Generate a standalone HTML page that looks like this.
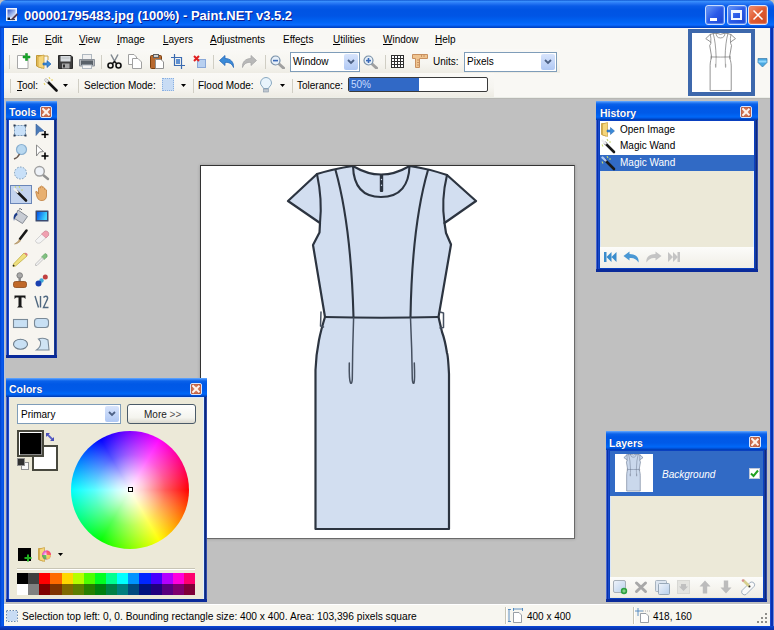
<!DOCTYPE html>
<html><head><meta charset="utf-8">
<style>
*{margin:0;padding:0;box-sizing:border-box}
html,body{width:774px;height:630px;overflow:hidden;background:#c0c0c0}
body{position:relative;font-family:"Liberation Sans",sans-serif;font-size:11px;color:#000}
.a{position:absolute}
.t{position:absolute;white-space:nowrap;line-height:1}
/* main frame */
#title{left:0;top:0;width:774px;height:28px;border-radius:6px 6px 0 0;
 background:linear-gradient(#0040c0 0px,#3d95ff 1px,#2a7af5 3px,#0a5ce8 6px,#0054e3 10px,#0055e5 16px,#0064f4 22px,#0a6aff 25px,#0050d8 26.5px,#003cc0 28px)}
#lb{left:0;top:28px;width:4px;height:602px;background:linear-gradient(90deg,#0040c8,#0a5cf0 50%,#0050e0)}
#rb{left:770px;top:28px;width:4px;height:602px;background:linear-gradient(90deg,#1848d0 0 1px,#0a30b0 1px 3px,#6a88e0 3px)}
#bb{left:0;top:626px;width:774px;height:4px;background:linear-gradient(#0a48d8,#0838b8 50%,#0830a8)}
#top{left:4px;top:28px;width:766px;height:70px;background:#f9f8f4}
#status{left:4px;top:604px;width:766px;height:22px;background:#f7f6f0;border-top:1px solid #fff}
.win{position:absolute;background:#0a3fd0;border:1px solid #0838b0}
.wt{position:absolute;left:0;top:0;right:0;height:19px;
 background:linear-gradient(#6fb0ff 0px,#3f8cf8 1px,#0a62ea 3px,#0058e6 6px,#005ae8 12px,#0068f8 16px,#0050d8 17.5px,#003aa8 19px)}
.wtt{position:absolute;left:3px;top:4px;color:#fff;font-weight:bold;font-size:10.5px;line-height:1;text-shadow:0 0 1px #0a2a8a}
.close{position:absolute;width:12px;height:12px;border:1px solid #d8e6ff;border-radius:2px;background:radial-gradient(circle at 50% 50%,#e8a080,#c86848 60%,#a84830)}
.close:before,.close:after{content:"";position:absolute;left:4.3px;top:0px;width:1.5px;height:10px;background:#fff4ee;transform:rotate(45deg)}
.close:after{transform:rotate(-45deg)}
.content{position:absolute;background:#ece9d8}
.sep{position:absolute;width:1px;background:#c5c2b2;border-right:1px solid #fff}
</style></head><body>
<div id="title" class="a"></div>
<div id="lb" class="a"></div>
<div id="rb" class="a"></div>
<div id="bb" class="a"></div>
<div class="a" style="left:4px;top:98px;width:1px;height:506px;background:#b8c4dc"></div>
<div id="top" class="a"></div>
<div class="a" style="left:4px;top:97px;width:766px;height:1px;background:#eceee8"></div>
<div class="a" style="left:4px;top:98px;width:766px;height:1px;background:#b8b8b4"></div>
<div id="status" class="a"></div>
<div class="a" style="left:4px;top:49px;width:556px;height:24px;background:linear-gradient(#faf9f6,#f6f5f0 60%,#eeece4)"></div>
<div class="a" style="left:4px;top:73px;width:490px;height:24px;background:linear-gradient(#faf9f6,#f6f5f0 60%,#eeece4)"></div>

<!-- title bar content -->
<svg class="a" style="left:6px;top:8px" width="12" height="14" viewBox="0 0 12 14">
 <defs><linearGradient id="ic1" x1="0" y1="0" x2="1" y2="1"><stop offset="0" stop-color="#3050c0"/><stop offset="0.6" stop-color="#a8c0f0"/><stop offset="1" stop-color="#f4f6ff"/></linearGradient></defs>
 <rect x="0" y="0" width="11" height="13" fill="#f0f4ff"/>
 <rect x="1.5" y="1.5" width="8" height="8" fill="url(#ic1)"/>
 <path d="M6 11.5 L11.5 6" stroke="#503850" stroke-width="1.8"/>
 <rect x="1.5" y="9.5" width="2.5" height="2.5" fill="#101018"/>
 <path d="M4 11.5 H9" stroke="#404050" stroke-width="1.2"/>
</svg>
<div class="t" style="left:24px;top:9px;font-size:13px;font-weight:bold;color:#fff;text-shadow:1px 1px 0 #0a1a90">000001795483.jpg (100%) - Paint.NET v3.5.2</div>
<div class="a" style="left:705px;top:5px;width:20px;height:20px;border:1px solid #c8dcff;border-radius:3px;background:linear-gradient(135deg,#6a9cf8,#2a5ae8 50%,#1a44d0);box-shadow:inset 0 0 1px 1px #5a88f0"></div>
<div class="a" style="left:710px;top:18px;width:7px;height:3px;background:#fff"></div>
<div class="a" style="left:727px;top:5px;width:20px;height:20px;border:1px solid #c8dcff;border-radius:3px;background:linear-gradient(135deg,#6a9cf8,#2a5ae8 50%,#1a44d0);box-shadow:inset 0 0 1px 1px #5a88f0"></div>
<div class="a" style="left:731px;top:10px;width:11px;height:10px;border:2px solid #f0f6ff;border-top-width:3px"></div>
<div class="a" style="left:748px;top:5px;width:20px;height:20px;border:1px solid #e0e8ff;border-radius:3px;background:linear-gradient(135deg,#f09070,#e05a30 50%,#c84824);box-shadow:inset 0 0 1px 1px #e88060"></div>
<svg class="a" style="left:752px;top:9px" width="12" height="12"><path d="M1.5 1.5 L10.5 10.5 M10.5 1.5 L1.5 10.5" stroke="#fff" stroke-width="1.5"/></svg>

<!-- menu -->
<div class="t" style="left:12px;top:35px;font-size:10px"><u>F</u>ile</div>
<div class="t" style="left:45px;top:35px;font-size:10px"><u>E</u>dit</div>
<div class="t" style="left:79px;top:35px;font-size:10px"><u>V</u>iew</div>
<div class="t" style="left:117px;top:35px;font-size:10px"><u>I</u>mage</div>
<div class="t" style="left:163px;top:35px;font-size:10px"><u>L</u>ayers</div>
<div class="t" style="left:210px;top:35px;font-size:10px"><u>A</u>djustments</div>
<div class="t" style="left:283px;top:35px;font-size:10px">Effe<u>c</u>ts</div>
<div class="t" style="left:333px;top:35px;font-size:10px"><u>U</u>tilities</div>
<div class="t" style="left:383px;top:35px;font-size:10px"><u>W</u>indow</div>
<div class="t" style="left:435px;top:35px;font-size:10px"><u>H</u>elp</div>

<!-- toolbar 1 -->
<div class="a" style="left:9px;top:55px;width:1px;height:14px;background:#d0cec4"></div>
<svg class="a" style="left:16px;top:53px" width="15" height="17" viewBox="0 0 15 17">
 <path d="M1.5 2.5 H9 L12 5.5 V15.5 H1.5Z" fill="#fff" stroke="#a8a8a8"/>
 <path d="M9.5 0.5 h2 v2.5 h2.5 v2 h-2.5 v2.5 h-2 v-2.5 h-2.5 v-2 h2.5z" fill="#1aa82a" stroke="#0a8a1a" stroke-width="0.5"/>
</svg>
<svg class="a" style="left:36px;top:54px" width="16" height="15" viewBox="0 0 16 15">
 <path d="M0.5 1.5 H6 V14 L0.5 12Z" fill="#f0c860" stroke="#c09838"/>
 <path d="M2 2.5 L8 1 V14.5 L2 13Z" fill="#f6d67a" stroke="#c8a040" stroke-width="0.8"/>
 <path d="M8 2 H12 V6" fill="none" stroke="#c8a040"/>
 <path d="M7 9 H11 V6.5 L15 10 L11 13.5 V11 H7Z" fill="#3a8ad8" stroke="#1a5aa8" stroke-width="0.6"/>
</svg>
<svg class="a" style="left:58px;top:55px" width="15" height="14" viewBox="0 0 15 14">
 <path d="M0.5 0.5 H13 L14.5 2 V13.5 H0.5Z" fill="#3e3e3e" stroke="#2a2a2a"/>
 <rect x="2.5" y="1" width="10" height="5.5" fill="#d8dce0"/>
 <path d="M3.5 3 H11.5" stroke="#b0b4b8" stroke-width="0.8"/>
 <rect x="4" y="8.5" width="7.5" height="5" fill="#a8a8a8"/>
 <rect x="5" y="9.5" width="2" height="3" fill="#303030"/>
</svg>
<svg class="a" style="left:79px;top:54px" width="16" height="15" viewBox="0 0 16 15">
 <rect x="3.5" y="0.5" width="9" height="5" fill="#f0f0f0" stroke="#b0b8c0"/>
 <path d="M0.5 5.5 H15.5 V12 H0.5Z" fill="#b8bcc0" stroke="#8a9098"/>
 <rect x="2" y="6.5" width="12" height="4.5" fill="#586068"/>
 <rect x="3.5" y="11" width="9" height="3.5" fill="#f4f4f4" stroke="#b0b8c0"/>
</svg>
<div class="a" style="left:101px;top:55px;width:1px;height:14px;background:#d0cec4"></div>
<svg class="a" style="left:107px;top:54px" width="15" height="15" viewBox="0 0 15 15">
 <path d="M4 0.5 L8.5 9 M11 0.5 L6.5 9" stroke="#808890" stroke-width="1.5"/>
 <circle cx="3.5" cy="11.5" r="2.5" fill="none" stroke="#101010" stroke-width="1.6"/>
 <circle cx="11.5" cy="11.5" r="2.5" fill="none" stroke="#101010" stroke-width="1.6"/>
 <path d="M5 10 L7.5 7.5 L10 10" stroke="#101010" stroke-width="1.4" fill="none"/>
</svg>
<svg class="a" style="left:128px;top:54px" width="14" height="15" viewBox="0 0 14 15">
 <path d="M0.5 0.5 H6 L8.5 3 V10.5 H0.5Z" fill="#fff" stroke="#a0a0a0"/>
 <path d="M4.5 4.5 H10 L13.5 8 V14.5 H4.5Z" fill="#fff" stroke="#a0a0a0"/>
</svg>
<svg class="a" style="left:150px;top:54px" width="14" height="15" viewBox="0 0 14 15">
 <rect x="0.5" y="1.5" width="11" height="13" rx="1" fill="#b86a30" stroke="#7a4010"/>
 <rect x="3.5" y="0.5" width="5" height="3" fill="#d0d0d0" stroke="#606060"/>
 <path d="M5.5 5.5 H11 L13.5 8 V14.5 H5.5Z" fill="#fff" stroke="#909090"/>
</svg>
<svg class="a" style="left:171px;top:54px" width="14" height="15" viewBox="0 0 14 15">
 <path d="M3.5 0 V11.5 H14 M0 3.5 H10.5 V15" fill="none" stroke="#3a6ab0" stroke-width="1.2"/>
 <rect x="5" y="5" width="4" height="5" fill="#6090d0"/>
</svg>
<svg class="a" style="left:193px;top:55px" width="13" height="13" viewBox="0 0 13 13">
 <rect x="4.5" y="4.5" width="8" height="8" fill="#b8d0f0" stroke="#8aa8d8"/>
 <path d="M1 1 L6 6 M6 1 L1 6" stroke="#e02020" stroke-width="2"/>
</svg>
<div class="a" style="left:213px;top:55px;width:1px;height:14px;background:#d0cec4"></div>
<svg class="a" style="left:219px;top:55px" width="16" height="13" viewBox="0 0 16 13">
 <path d="M6 0.5 L0.5 5.5 L6 10.5 V7.5 C10 7 13 8.5 14.5 12.5 C15 7 11.5 3.5 6 3.5Z" fill="#3a8ad8" stroke="#2a6ab8" stroke-width="0.8"/>
</svg>
<svg class="a" style="left:241px;top:55px" width="16" height="13" viewBox="0 0 16 13">
 <path d="M10 0.5 L15.5 5.5 L10 10.5 V7.5 C6 7 3 8.5 1.5 12.5 C1 7 4.5 3.5 10 3.5Z" fill="#b8b8b8" stroke="#a8a8a8" stroke-width="0.8"/>
</svg>
<div class="a" style="left:265px;top:55px;width:1px;height:14px;background:#d0cec4"></div>
<svg class="a" style="left:270px;top:55px" width="15" height="14" viewBox="0 0 15 14">
 <path d="M8 8 L13.5 13" stroke="#a0a0a0" stroke-width="3" stroke-linecap="round"/>
 <circle cx="5.5" cy="5.5" r="4.5" fill="#e8f0f8" stroke="#7890a8" stroke-width="1.2"/>
 <rect x="3" y="4.8" width="5" height="1.6" fill="#3a6ab8"/>
</svg>
<div class="a" style="left:290px;top:52px;width:70px;height:20px;background:#fff;border:1px solid #7f9db9"></div>
<div class="t" style="left:293px;top:57px;font-size:10px">Window</div>
<div class="a" style="left:344px;top:54px;width:14px;height:16px;border-radius:2px;background:linear-gradient(#d8e4fc,#b0c8f4)"></div>
<svg class="a" style="left:347px;top:59px" width="8" height="6"><path d="M1 1 L4 4 L7 1" fill="none" stroke="#4d6185" stroke-width="1.8"/></svg>
<svg class="a" style="left:363px;top:55px" width="15" height="14" viewBox="0 0 15 14">
 <path d="M8 8 L13.5 13" stroke="#a0a0a0" stroke-width="3" stroke-linecap="round"/>
 <circle cx="5.5" cy="5.5" r="4.5" fill="#e8f0f8" stroke="#7890a8" stroke-width="1.2"/>
 <rect x="3" y="4.8" width="5" height="1.6" fill="#3a6ab8"/><rect x="4.7" y="3" width="1.6" height="5" fill="#3a6ab8"/>
</svg>
<div class="a" style="left:385px;top:55px;width:1px;height:14px;background:#d0cec4"></div>
<svg class="a" style="left:391px;top:55px" width="13" height="13" viewBox="0 0 13 13">
 <rect x="0.5" y="0.5" width="12" height="12" fill="#fff" stroke="#303030"/>
 <path d="M3.5 0 V13 M6.5 0 V13 M9.5 0 V13 M0 3.5 H13 M0 6.5 H13 M0 9.5 H13" stroke="#303030"/>
</svg>
<svg class="a" style="left:412px;top:54px" width="16" height="14" viewBox="0 0 16 14">
 <path d="M0.5 0.5 H15.5 V4.5 H7.5 V13.5 H3.5 V4.5 H0.5Z" fill="#f0c490" stroke="#c89060"/>
 <path d="M5 6 H7 M5 8.5 H7 M5 11 H7 M9.5 1 V3 M12 1 V3" stroke="#b88050" stroke-width="0.7"/>
</svg>
<div class="t" style="left:433px;top:57px;font-size:10px">Units:</div>
<div class="a" style="left:464px;top:52px;width:93px;height:20px;background:#fff;border:1px solid #7f9db9"></div>
<div class="t" style="left:467px;top:57px;font-size:10px">Pixels</div>
<div class="a" style="left:541px;top:54px;width:14px;height:16px;border-radius:2px;background:linear-gradient(#d8e4fc,#b0c8f4)"></div>
<svg class="a" style="left:544px;top:59px" width="8" height="6"><path d="M1 1 L4 4 L7 1" fill="none" stroke="#4d6185" stroke-width="1.8"/></svg>

<!-- toolbar 2 -->
<div class="a" style="left:10px;top:79px;width:1px;height:14px;background:#d0cec4"></div>
<div class="t" style="left:17px;top:81px;font-size:10px"><u>T</u>ool:</div>
<svg class="a" style="left:43px;top:77px" width="15" height="15" viewBox="0 0 15 15">
 <path d="M3 3 L13.5 13.5" stroke="#101010" stroke-width="2.6" stroke-linecap="round"/>
 <path d="M2 2 L5 5" stroke="#e0e0e0" stroke-width="2.6"/>
 <path d="M6 0 L7 2 M8 3 L10 3 M1 6 L2 8" stroke="#e8d050" stroke-width="1"/>
</svg>
<svg class="a" style="left:63px;top:84px" width="6" height="4"><path d="M0 0 H5 L2.5 3Z" fill="#000"/></svg>
<div class="a" style="left:78px;top:79px;width:1px;height:14px;background:#d0cec4"></div>
<div class="t" style="left:84px;top:81px;font-size:10px">Selection Mode:</div>
<div class="a" style="left:162px;top:78px;width:12px;height:13px;background:#c8dcf4;border:1px dotted #8ab0e0"></div>
<svg class="a" style="left:181px;top:84px" width="6" height="4"><path d="M0 0 H5 L2.5 3Z" fill="#000"/></svg>
<div class="a" style="left:193px;top:79px;width:1px;height:14px;background:#d0cec4"></div>
<div class="t" style="left:198px;top:81px;font-size:10px">Flood Mode:</div>
<svg class="a" style="left:260px;top:77px" width="12" height="16" viewBox="0 0 12 16">
 <path d="M6 0.5 C9 0.5 11.5 3 11.5 6 C11.5 8.5 9 9.5 8.5 11.5 H3.5 C3 9.5 0.5 8.5 0.5 6 C0.5 3 3 0.5 6 0.5Z" fill="#e8f4fc" stroke="#88a8c0"/>
 <rect x="3.5" y="12" width="5" height="3" fill="#c0c8d0" stroke="#8898a8" stroke-width="0.6"/>
</svg>
<svg class="a" style="left:280px;top:84px" width="6" height="4"><path d="M0 0 H5 L2.5 3Z" fill="#000"/></svg>
<div class="a" style="left:292px;top:79px;width:1px;height:14px;background:#d0cec4"></div>
<div class="t" style="left:297px;top:81px;font-size:10px">Tolerance:</div>
<div class="a" style="left:348px;top:77px;width:140px;height:15px;background:#fff;border:1px solid #3a3a3a;border-radius:2px;overflow:hidden">
 <div class="a" style="left:0;top:0;width:70px;height:13px;background:#3169c6"></div>
 <div class="t" style="left:2px;top:2px;font-size:10px;color:#c8dcff">50%</div>
</div>

<!-- navigator -->
<div class="a" style="left:688px;top:29px;width:67px;height:67px;border:4px solid #3d68ac;background:#fff"></div>
<svg class="a" style="left:692px;top:33px" width="59" height="59" viewBox="201 166 373 372"><g stroke-linejoin="round" stroke-linecap="round">
  <path style="fill:#fff;stroke:#777;stroke-width:5" d="M353 166 Q333 169 317 174 L288 201 L320 223 L319.5 232.5 L313 245 L325 317 Q321 330 319 340 Q316 355 315.5 370 L315.5 529 L449 529 L449 374 Q448 355 447 353 Q445 340 442 332 L438.5 317 L451 244.5 L446 233 L444.5 223 L476 201 L447 175 Q430 169 409.5 166 Q381 183 353 166Z"/>
  <path style="fill:none;stroke:#777;stroke-width:4.5" d="M353 166 C353.5 184 361 197 381 197 C401 197 409 184 409.5 166"/>
  <path style="fill:none;stroke:#777;stroke-width:4.5" d="M317 174 Q322.5 200 320 223"/>
  <path style="fill:none;stroke:#777;stroke-width:4.5" d="M447 175 Q441 200 444.5 223"/>
  <path style="fill:none;stroke:#777;stroke-width:4.5" d="M335.5 170 Q351 225 353.5 317"/>
  <path style="fill:none;stroke:#777;stroke-width:4.5" d="M428 170 Q412 225 410.5 317"/>
  <path style="fill:none;stroke:#777;stroke-width:4.5" d="M325 317 Q381 318.5 438.5 317"/>
  <path style="fill:none;stroke:#888;stroke-width:4" d="M353.6 318 Q352.5 350 352.3 379 Q352 384.5 350.5 383 Q349 380 349.3 363"/>
  <path style="fill:none;stroke:#888;stroke-width:4" d="M410.5 318 Q412 350 412.3 379 Q412.6 384.5 414 383 Q415 380 414.3 363"/>
  <path style="fill:none;stroke:#888;stroke-width:4" d="M321 312 L320.5 326 L323.5 327"/>
  <path style="fill:none;stroke:#888;stroke-width:4" d="M440 312 L443.5 313 L443.5 327.5 L440 328"/>
  <g style="fill:none"><rect x="379.8" y="174" width="3.4" height="18" rx="1"/></g><g style="fill:#fff"><circle cx="381.5" cy="179.5" r="0.7"/><circle cx="381.5" cy="185.3" r="0.7"/></g>
 </g>
 </svg>
<svg class="a" style="left:757px;top:58px" width="11" height="10" viewBox="0 0 11 10">
 <path d="M1 0.5 H10 V4.5 L5.5 9 L1 4.5Z" fill="#4aa8e0" stroke="#3a78a8" stroke-width="0.7"/>
 <rect x="1.5" y="2.5" width="8" height="2" fill="#90d8ff"/>
</svg>

<!-- canvas -->
<div class="a" style="left:200px;top:165px;width:375px;height:374px;background:#fff;border:1px solid #333;border-right-color:#6a6a6a;border-bottom-color:#6a6a6a;box-shadow:0 0 3px rgba(0,0,0,0.22)"></div>

<svg class="a" style="left:201px;top:166px" width="373" height="372" viewBox="201 166 373 372"><g stroke-linejoin="round" stroke-linecap="round">
  <path style="fill:#d2def0;stroke:#2c3440;stroke-width:2.2" d="M353 166 Q333 169 317 174 L288 201 L320 223 L319.5 232.5 L313 245 L325 317 Q321 330 319 340 Q316 355 315.5 370 L315.5 529 L449 529 L449 374 Q448 355 447 353 Q445 340 442 332 L438.5 317 L451 244.5 L446 233 L444.5 223 L476 201 L447 175 Q430 169 409.5 166 Q381 183 353 166Z"/>
  <path style="fill:none;stroke:#2c3440;stroke-width:2.1" d="M353 166 C353.5 184 361 197 381 197 C401 197 409 184 409.5 166"/>
  <path style="fill:none;stroke:#2c3440;stroke-width:2.1" d="M317 174 Q322.5 200 320 223"/>
  <path style="fill:none;stroke:#2c3440;stroke-width:2.1" d="M447 175 Q441 200 444.5 223"/>
  <path style="fill:none;stroke:#2c3440;stroke-width:2.1" d="M335.5 170 Q351 225 353.5 317"/>
  <path style="fill:none;stroke:#2c3440;stroke-width:2.1" d="M428 170 Q412 225 410.5 317"/>
  <path style="fill:none;stroke:#2c3440;stroke-width:2.1" d="M325 317 Q381 318.5 438.5 317"/>
  <path style="fill:none;stroke:#465060;stroke-width:1.5" d="M353.6 318 Q352.5 350 352.3 379 Q352 384.5 350.5 383 Q349 380 349.3 363"/>
  <path style="fill:none;stroke:#465060;stroke-width:1.5" d="M410.5 318 Q412 350 412.3 379 Q412.6 384.5 414 383 Q415 380 414.3 363"/>
  <path style="fill:none;stroke:#465060;stroke-width:1.5" d="M321 312 L320.5 326 L323.5 327"/>
  <path style="fill:none;stroke:#465060;stroke-width:1.5" d="M440 312 L443.5 313 L443.5 327.5 L440 328"/>
  <g style="fill:#2c3440"><rect x="379.8" y="174" width="3.4" height="18" rx="1"/></g><g style="fill:#d2def0"><circle cx="381.5" cy="179.5" r="0.7"/><circle cx="381.5" cy="185.3" r="0.7"/></g>
 </g>
 </svg>

<!-- windows -->
<div class="a" style="left:6px;top:101px;width:51px;height:257px;background:linear-gradient(90deg,#4a68d0 0 1px,#0830a8 1px 2px,#1a48c8 2px 3px,#0a40c0 3px calc(100% - 3px),#1a3a98 calc(100% - 3px) calc(100% - 2px),#0a2a80 calc(100% - 2px) calc(100% - 1px),#3048a8 calc(100% - 1px));border-radius:3px 3px 0 0"></div>
<div class="a" style="left:6px;top:355px;width:51px;height:3px;background:#0a2a9a"></div>
<div class="a wt" style="left:6px;top:101px;width:51px"></div>
<div class="wtt" style="left:9px;top:107px">Tools</div>
<div class="close" style="left:40px;top:106px"></div>
<div class="content" style="left:9px;top:120px;width:45px;height:235px;background:#f7f5f0;border-left:1px solid #fff;border-top:1px solid #e8f0ff"></div>
<div class="a" style="left:6px;top:378px;width:201px;height:224px;background:linear-gradient(90deg,#4a68d0 0 1px,#0830a8 1px 2px,#1a48c8 2px 3px,#0a40c0 3px calc(100% - 3px),#1a3a98 calc(100% - 3px) calc(100% - 2px),#0a2a80 calc(100% - 2px) calc(100% - 1px),#3048a8 calc(100% - 1px));border-radius:3px 3px 0 0"></div>
<div class="a" style="left:6px;top:599px;width:201px;height:3px;background:#0a2a9a"></div>
<div class="a wt" style="left:6px;top:378px;width:201px"></div>
<div class="wtt" style="left:9px;top:384px">Colors</div>
<div class="close" style="left:190px;top:383px"></div>
<div class="content" style="left:9px;top:397px;width:195px;height:202px;border-left:1px solid #d8e6fa;border-right:1px solid #e0f0ff;border-top:1px solid #d8e8ff"></div>
<div class="a" style="left:596px;top:101px;width:162px;height:171px;background:linear-gradient(90deg,#4a68d0 0 1px,#0830a8 1px 2px,#1a48c8 2px 3px,#0a40c0 3px calc(100% - 3px),#1a3a98 calc(100% - 3px) calc(100% - 2px),#0a2a80 calc(100% - 2px) calc(100% - 1px),#3048a8 calc(100% - 1px));border-radius:3px 3px 0 0"></div>
<div class="a" style="left:596px;top:269px;width:162px;height:3px;background:#0a2a9a"></div>
<div class="a wt" style="left:596px;top:101px;width:162px"></div>
<div class="wtt" style="left:600px;top:108px">History</div>
<div class="close" style="left:740px;top:106px"></div>
<div class="content" style="left:600px;top:121px;width:154px;height:147px;border-left:1px solid #d8e6fa;border-right:1px solid #e0f0ff"></div>
<div class="a" style="left:606px;top:431px;width:161px;height:171px;background:linear-gradient(90deg,#4a68d0 0 1px,#0830a8 1px 2px,#1a48c8 2px 3px,#0a40c0 3px calc(100% - 3px),#1a3a98 calc(100% - 3px) calc(100% - 2px),#0a2a80 calc(100% - 2px) calc(100% - 1px),#3048a8 calc(100% - 1px));border-radius:3px 3px 0 0"></div>
<div class="a" style="left:606px;top:599px;width:161px;height:3px;background:#0a2a9a"></div>
<div class="a wt" style="left:606px;top:431px;width:161px"></div>
<div class="wtt" style="left:609px;top:438px">Layers</div>
<div class="close" style="left:749px;top:436px"></div>
<div class="content" style="left:610px;top:451px;width:153px;height:147px;border-left:1px solid #d8e6fa;border-right:1px solid #e0f0ff"></div>

<!-- tools icons -->
<div class="a" style="left:10px;top:185px;width:22px;height:19px;background:#c4d4ee;border:1px solid #6a86b8"></div>
<svg class="a" style="left:9px;top:120px" width="45" height="235" viewBox="9 120 45 235">
 <!-- rect select -->
 <rect x="14.5" y="125.5" width="11" height="10" fill="#c8e0f8" stroke="#7a9ab8" stroke-dasharray="2 1"/>
 <g fill="#2a3a50"><rect x="13.5" y="124.5" width="2" height="2"/><rect x="24.5" y="124.5" width="2" height="2"/><rect x="13.5" y="134.5" width="2" height="2"/><rect x="24.5" y="134.5" width="2" height="2"/></g>
 <!-- move selection -->
 <path d="M36 124 L44 131 L39.5 131.5 L36 135.5Z" fill="#4a7ab8" stroke="#3a6098" stroke-width="0.6"/>
 <path d="M45 131 V138 M41.5 134.5 H48.5" stroke="#000" stroke-width="1.6"/>
 <!-- lasso -->
 <circle cx="21.5" cy="149.5" r="5" fill="#b8d8f0" stroke="#8ab0d0" stroke-width="1.2"/>
 <path d="M19.5 154 Q18 157.5 14 159" fill="none" stroke="#6a5a50" stroke-width="1.5"/>
 <!-- move selected outline -->
 <path d="M36.5 145 L43.5 151.5 L39.5 152 L36.5 156Z" fill="#fff" stroke="#808080" stroke-width="0.9"/>
 <path d="M45 152.5 V159.5 M41.5 156 H48.5" stroke="#000" stroke-width="1.6"/>
 <!-- ellipse select -->
 <circle cx="20.5" cy="173" r="6" fill="#c8e0f8" stroke="#7a9ab8" stroke-dasharray="1.6 1.4"/>
 <!-- zoom -->
 <path d="M42.5 174.5 L48 179" stroke="#909090" stroke-width="2.4" stroke-linecap="round"/>
 <circle cx="39.5" cy="171.3" r="4.8" fill="#eef2f8" stroke="#a0a0a0" stroke-width="1.5"/>
 <!-- magic wand -->
 <path d="M17 191.5 L26 200.5" stroke="#181818" stroke-width="2.6" stroke-linecap="round"/>
 <path d="M14.5 189 L17.5 192" stroke="#f0f0f0" stroke-width="2.4" stroke-linecap="round"/>
 <path d="M19 186 L20 188 M21 190 L23 190 M15 186.5 L16 187.5" stroke="#c8d870" stroke-width="1.1"/>
 <!-- hand -->
 <path d="M36 193 Q35 191 37 191.5 L38.5 194 V188 Q39.5 186.5 40.5 188 V186.5 Q41.5 185.5 42.5 186.5 V187.5 Q43.5 186.5 44.5 188 V189.5 Q45.5 188.5 46.5 190 V196 Q46 200.5 42 200.5 H40.5 Q38 200 37 197Z" fill="#e8b070" stroke="#c08040" stroke-width="0.8"/>
 <!-- paint bucket -->
 <path d="M18 210 L27.5 216.5 L22.5 223.5 L14.5 218.5Z" fill="#c8ccd4" stroke="#7a808a" stroke-width="0.9"/>
 <path d="M17 213 Q14 213 13.5 218 L14 221 Q15 216 17.5 215" fill="#1a3a88"/>
 <path d="M19 209 Q21 208 22 210" fill="none" stroke="#606670" stroke-width="1"/>
 <!-- gradient -->
 <rect x="35.5" y="210.5" width="13" height="11" fill="#3a4a70" rx="0.5"/>
 <rect x="37" y="212" width="10" height="8" fill="url(#gr1)"/>
 <defs><linearGradient id="gr1" x1="0" y1="0" x2="1" y2="0.3"><stop offset="0" stop-color="#0050e8"/><stop offset="1" stop-color="#40d8ff"/></linearGradient></defs>
 <!-- paintbrush -->
 <path d="M26.5 230.5 L20 239" stroke="#181818" stroke-width="2.6" stroke-linecap="round"/>
 <path d="M19.5 239.5 Q17 243 14.5 244 Q17 244.5 20.5 241Z" fill="#c8a878" stroke="#a88858" stroke-width="0.6"/>
 <!-- eraser -->
 <path d="M45 231 Q49.5 231 48.5 235.5 L40 243 Q36 244 35.5 240.5Z" fill="#f4f4f4" stroke="#c8c8c8" stroke-width="0.8"/>
 <path d="M45 231 Q49.5 231 48.5 235.5 L46 238 L41.5 234Z" fill="#f0a0b0" stroke="#d08090" stroke-width="0.6"/>
 <!-- pencil -->
 <path d="M24 253 L27 256 L15.5 266 L13 266.5 L13.5 264Z" fill="#f0e080" stroke="#c0b040" stroke-width="0.8"/>
 <path d="M24 253 Q26 252 27.5 254 Q28 255 27 256Z" fill="#e08080"/>
 <circle cx="13.6" cy="265.6" r="0.9" fill="#202020"/>
 <!-- color picker -->
 <path d="M45 253.5 Q48 254 47 257 L44 259.5 L41.5 257Z" fill="#80c080" stroke="#60a060" stroke-width="0.6"/>
 <path d="M42 257.5 L43.5 259 L37 265.5 L35.5 265.5 L35.5 264Z" fill="#f0f0f0" stroke="#b8b8b8" stroke-width="0.8"/>
 <!-- clone stamp -->
 <circle cx="19.7" cy="275.5" r="2.8" fill="#a8a8a8" stroke="#707070" stroke-width="0.8"/>
 <rect x="18.5" y="277.5" width="2.4" height="4" fill="#888"/>
 <rect x="13.5" y="281.5" width="13" height="6" rx="2" fill="#c06828" stroke="#8a4818" stroke-width="0.8"/>
 <!-- recolor -->
 <circle cx="45.3" cy="277" r="2.5" fill="#c04040"/>
 <circle cx="41.5" cy="280.5" r="2.2" fill="#40a8d8"/>
 <circle cx="38.5" cy="283.5" r="3" fill="#1a40b0"/>
 <!-- text -->
 <path d="M14.5 295.5 H25.5 V299 L24 297.5 H21.5 V306 L23 307.5 H17 L18.5 306 V297.5 H16 L14.5 299Z" fill="#181818"/>
 <!-- line/curve -->
 <path d="M35 296 L38.5 307.5 M40.5 296 V307.5 M43.5 297.5 Q45 295.5 47 296.5 Q48.5 298 46.5 301 L43.5 307.5 H48.5" fill="none" stroke="#506880" stroke-width="1.4"/>
 <!-- rectangle -->
 <rect x="13.5" y="319.5" width="14" height="8" fill="#c8e0f4" stroke="#7a8a98" stroke-width="1.1"/>
 <!-- rounded rect -->
 <rect x="34.5" y="318.5" width="14" height="9" rx="3" fill="#c8e0f4" stroke="#7a8a98" stroke-width="1.1"/>
 <!-- ellipse -->
 <ellipse cx="20.5" cy="344.2" rx="7" ry="5" fill="#c8e0f4" stroke="#6a7a88" stroke-width="1.1"/>
 <!-- freeform -->
 <path d="M40 338.5 Q45 337.5 48 340 L49 350 H36.5 Q40.5 347 40.5 344 Q41 341 38.5 339Z" fill="#d0e4f4" stroke="#7a8a98" stroke-width="1.1"/>
</svg>

<!-- colors content -->
<div class="a" style="left:17px;top:404px;width:104px;height:20px;background:#fff;border:1px solid #7f9db9"></div>
<div class="t" style="left:21px;top:410px;font-size:10px">Primary</div>
<div class="a" style="left:105px;top:406px;width:14px;height:16px;border-radius:2px;background:linear-gradient(#d8e4fc,#b0c8f4)"></div>
<svg class="a" style="left:108px;top:411px" width="8" height="6"><path d="M1 1 L4 4 L7 1" fill="none" stroke="#4d6185" stroke-width="1.8"/></svg>
<div class="a" style="left:127px;top:404px;width:69px;height:20px;border:1px solid #4a5a68;border-radius:3px;background:linear-gradient(#fff,#f4f4ee 70%,#dcdad0)"></div>
<div class="t" style="left:144px;top:410px;font-size:10px;color:#222">More <span style="color:#555">&gt;&gt;</span></div>
<div class="a" style="left:32px;top:445px;width:26px;height:26px;background:#fff;border:2px solid #48483e"></div>
<div class="a" style="left:17px;top:430px;width:27px;height:27px;background:#000;border:2px solid #48483e;box-shadow:inset 1px 1px 0 0 #fff,inset -1px -1px 0 0 #888"></div>
<svg class="a" style="left:45px;top:432px" width="10" height="10" viewBox="0 0 10 10"><path d="M2.5 2.5 L7.5 7.5" stroke="#5a60c8" stroke-width="1.8"/><path d="M1 1 H5 L1 5Z M9 9 H5 L9 5Z" fill="#4a50b8"/></svg>
<div class="a" style="left:21px;top:462px;width:8px;height:8px;background:#f8f8f8;border:1px solid #909090"></div>
<div class="a" style="left:17px;top:458px;width:8px;height:8px;background:#303030;border:1px solid #909090"></div>
<div class="a" style="left:71px;top:431px;width:118px;height:118px;border-radius:50%;background:conic-gradient(from 90deg,#f00,#ff0,#0f0,#0ff,#00f,#f0f,#f00)"></div>
<div class="a" style="left:71px;top:431px;width:118px;height:118px;border-radius:50%;background:radial-gradient(closest-side,#fff 0%,rgba(255,255,255,0.8) 22%,rgba(255,255,255,0.35) 60%,rgba(255,255,255,0) 100%)"></div>
<div class="a" style="left:128px;top:487px;width:5px;height:5px;border:1px solid #000;background:#fff"></div>
<div class="a" style="left:18px;top:548px;width:13px;height:13px;background:#000"></div>
<svg class="a" style="left:24px;top:554px" width="8" height="8"><path d="M4 0.5 V7.5 M0.5 4 H7.5" stroke="#20b020" stroke-width="2"/></svg>
<svg class="a" style="left:38px;top:547px" width="14" height="15" viewBox="0 0 14 15">
 <path d="M0.5 1.5 H5 V14 L0.5 12.5Z" fill="#f0c860" stroke="#c09838" stroke-width="0.8"/>
 <path d="M1.5 2 L6.5 0.5 V14.5 L1.5 13Z" fill="#f6d67a" stroke="#c8a040" stroke-width="0.7"/>
 <circle cx="8.5" cy="8" r="4.5" fill="url(#cw2)"/>
 <defs><radialGradient id="cw2"><stop offset="0" stop-color="#fff"/><stop offset="1" stop-color="#e040c0"/></radialGradient></defs>
 <path d="M8.5 3.5 A4.5 4.5 0 0 1 13 8 H8.5Z" fill="#ff5050" opacity="0.8"/>
 <path d="M8.5 12.5 A4.5 4.5 0 0 1 4 8 H8.5Z" fill="#40c040" opacity="0.8"/>
 <path d="M13 8 A4.5 4.5 0 0 1 8.5 12.5 V8Z" fill="#f0e040" opacity="0.8"/>
</svg>
<svg class="a" style="left:58px;top:553px" width="6" height="4"><path d="M0 0 H5 L2.5 3Z" fill="#000"/></svg>
<div class="a" style="left:17px;top:568px;width:178px;height:1px;background:#c8c5b5;border-bottom:1px solid #fff;box-sizing:content-box"></div>
<div class="a" style="left:17.00px;top:573px;width:11.2px;height:11px;background:#000000"></div><div class="a" style="left:17.00px;top:584px;width:11.2px;height:11px;background:#ffffff"></div>
<div class="a" style="left:28.12px;top:573px;width:11.2px;height:11px;background:#404040"></div><div class="a" style="left:28.12px;top:584px;width:11.2px;height:11px;background:#808080"></div>
<div class="a" style="left:39.25px;top:573px;width:11.2px;height:11px;background:#ff0000"></div><div class="a" style="left:39.25px;top:584px;width:11.2px;height:11px;background:#7f0000"></div>
<div class="a" style="left:50.38px;top:573px;width:11.2px;height:11px;background:#ff6a00"></div><div class="a" style="left:50.38px;top:584px;width:11.2px;height:11px;background:#7f3300"></div>
<div class="a" style="left:61.50px;top:573px;width:11.2px;height:11px;background:#ffd800"></div><div class="a" style="left:61.50px;top:584px;width:11.2px;height:11px;background:#7f6a00"></div>
<div class="a" style="left:72.62px;top:573px;width:11.2px;height:11px;background:#b6ff00"></div><div class="a" style="left:72.62px;top:584px;width:11.2px;height:11px;background:#5b7f00"></div>
<div class="a" style="left:83.75px;top:573px;width:11.2px;height:11px;background:#4cff00"></div><div class="a" style="left:83.75px;top:584px;width:11.2px;height:11px;background:#267f00"></div>
<div class="a" style="left:94.88px;top:573px;width:11.2px;height:11px;background:#00ff21"></div><div class="a" style="left:94.88px;top:584px;width:11.2px;height:11px;background:#007f0e"></div>
<div class="a" style="left:106.00px;top:573px;width:11.2px;height:11px;background:#00ff90"></div><div class="a" style="left:106.00px;top:584px;width:11.2px;height:11px;background:#007f46"></div>
<div class="a" style="left:117.12px;top:573px;width:11.2px;height:11px;background:#00ffff"></div><div class="a" style="left:117.12px;top:584px;width:11.2px;height:11px;background:#007f7f"></div>
<div class="a" style="left:128.25px;top:573px;width:11.2px;height:11px;background:#0094ff"></div><div class="a" style="left:128.25px;top:584px;width:11.2px;height:11px;background:#004a7f"></div>
<div class="a" style="left:139.38px;top:573px;width:11.2px;height:11px;background:#0026ff"></div><div class="a" style="left:139.38px;top:584px;width:11.2px;height:11px;background:#00137f"></div>
<div class="a" style="left:150.50px;top:573px;width:11.2px;height:11px;background:#4800ff"></div><div class="a" style="left:150.50px;top:584px;width:11.2px;height:11px;background:#21007f"></div>
<div class="a" style="left:161.62px;top:573px;width:11.2px;height:11px;background:#b200ff"></div><div class="a" style="left:161.62px;top:584px;width:11.2px;height:11px;background:#57007f"></div>
<div class="a" style="left:172.75px;top:573px;width:11.2px;height:11px;background:#ff00dc"></div><div class="a" style="left:172.75px;top:584px;width:11.2px;height:11px;background:#7f006e"></div>
<div class="a" style="left:183.88px;top:573px;width:11.2px;height:11px;background:#ff006e"></div><div class="a" style="left:183.88px;top:584px;width:11.2px;height:11px;background:#7f0037"></div>

<!-- history content -->
<div class="a" style="left:600px;top:121px;width:154px;height:50px;background:#fff"></div>
<div class="a" style="left:600px;top:155px;width:154px;height:16px;background:#316ac5"></div>
<svg class="a" style="left:601px;top:122px" width="15" height="15" viewBox="0 0 15 15">
 <path d="M0.5 1.5 H5 V14 L0.5 12.5Z" fill="#f0c860" stroke="#c09838" stroke-width="0.8"/>
 <path d="M1.5 2 L6.5 0.5 V14.5 L1.5 13Z" fill="#f6d67a" stroke="#c8a040" stroke-width="0.7"/>
 <path d="M6 8 H9.5 V5.5 L13.5 9 L9.5 12.5 V10 H6Z" fill="#3a8ad8" stroke="#1a5aa8" stroke-width="0.5"/>
</svg>
<svg class="a" style="left:601px;top:139px" width="15" height="15" viewBox="0 0 15 15"><path d="M4 4 L13 13" stroke="#181818" stroke-width="2.6" stroke-linecap="round"/><path d="M1.5 1.5 L4.5 4.5" stroke="#f0f0f0" stroke-width="2.4" stroke-linecap="round"/><path d="M6 0 L7 2 M8 3 L10 3 M1 5.5 L2 7.5" stroke="#c8d870" stroke-width="1.1"/></svg><svg class="a" style="left:601px;top:156px" width="15" height="15" viewBox="0 0 15 15"><path d="M4 4 L13 13" stroke="#181818" stroke-width="2.6" stroke-linecap="round"/><path d="M1.5 1.5 L4.5 4.5" stroke="#b0c8f0" stroke-width="2.4" stroke-linecap="round"/><path d="M6 0 L7 2 M8 3 L10 3 M1 5.5 L2 7.5" stroke="#c8d870" stroke-width="1.1"/></svg>
<div class="t" style="left:620px;top:125px;font-size:10px">Open Image</div>
<div class="t" style="left:620px;top:141px;font-size:10px">Magic Wand</div>
<div class="t" style="left:620px;top:158px;font-size:10px;color:#fff">Magic Wand</div>
<div class="a" style="left:600px;top:247px;width:154px;height:21px;background:linear-gradient(#fcfcfa,#f0eee6)"></div>
<svg class="a" style="left:603px;top:251px" width="80" height="12" viewBox="0 0 80 12">
 <g fill="#3a8ccc">
  <rect x="1" y="1" width="2.5" height="10"/>
  <path d="M8.5 1 L3.5 6 L8.5 11Z M13.5 1 L8.5 6 L13.5 11Z"/>
 </g>
 <path d="M26.5 0.5 L20.5 5 L26.5 9.5 V7 C30.5 6.5 33.5 8 35.5 11.5 C36.5 6 32 3 26.5 3Z" fill="#4a98d4"/>
 <path d="M52.5 0.5 L58.5 5 L52.5 9.5 V7 C48.5 6.5 45.5 8 43.5 11.5 C42.5 6 47 3 52.5 3Z" fill="#c4c4c4"/>
 <g fill="#c4c4c4">
  <path d="M65 1 L70 6 L65 11Z M70 1 L75 6 L70 11Z"/>
  <rect x="74.5" y="1" width="2.5" height="10"/>
 </g>
</svg>

<!-- layers content -->
<div class="a" style="left:610px;top:451px;width:153px;height:45px;background:#316ac5"></div>
<div class="a" style="left:615px;top:454px;width:38px;height:38px;background:#fff"></div>
<svg class="a" style="left:615px;top:454px" width="38" height="38" viewBox="201 166 373 372"><g stroke-linejoin="round" stroke-linecap="round">
  <path style="fill:#cad8ec;stroke:#6a7890;stroke-width:6" d="M353 166 Q333 169 317 174 L288 201 L320 223 L319.5 232.5 L313 245 L325 317 Q321 330 319 340 Q316 355 315.5 370 L315.5 529 L449 529 L449 374 Q448 355 447 353 Q445 340 442 332 L438.5 317 L451 244.5 L446 233 L444.5 223 L476 201 L447 175 Q430 169 409.5 166 Q381 183 353 166Z"/>
  <path style="fill:none;stroke:#6a7890;stroke-width:5" d="M353 166 C353.5 184 361 197 381 197 C401 197 409 184 409.5 166"/>
  <path style="fill:none;stroke:#6a7890;stroke-width:5" d="M317 174 Q322.5 200 320 223"/>
  <path style="fill:none;stroke:#6a7890;stroke-width:5" d="M447 175 Q441 200 444.5 223"/>
  <path style="fill:none;stroke:#6a7890;stroke-width:5" d="M335.5 170 Q351 225 353.5 317"/>
  <path style="fill:none;stroke:#6a7890;stroke-width:5" d="M428 170 Q412 225 410.5 317"/>
  <path style="fill:none;stroke:#6a7890;stroke-width:5" d="M325 317 Q381 318.5 438.5 317"/>
  <path style="fill:none;stroke:#7a8498;stroke-width:5" d="M353.6 318 Q352.5 350 352.3 379 Q352 384.5 350.5 383 Q349 380 349.3 363"/>
  <path style="fill:none;stroke:#7a8498;stroke-width:5" d="M410.5 318 Q412 350 412.3 379 Q412.6 384.5 414 383 Q415 380 414.3 363"/>
  <path style="fill:none;stroke:#7a8498;stroke-width:5" d="M321 312 L320.5 326 L323.5 327"/>
  <path style="fill:none;stroke:#7a8498;stroke-width:5" d="M440 312 L443.5 313 L443.5 327.5 L440 328"/>
  <g style="fill:none"><rect x="379.8" y="174" width="3.4" height="18" rx="1"/></g><g style="fill:#cad8ec"><circle cx="381.5" cy="179.5" r="0.7"/><circle cx="381.5" cy="185.3" r="0.7"/></g>
 </g>
 </svg>
<div class="t" style="left:662px;top:470px;font-size:10px;font-style:italic;color:#fff">Background</div>
<div class="a" style="left:749px;top:468px;width:11px;height:11px;background:#fff;border:1px solid #c0c8d8"></div>
<svg class="a" style="left:750px;top:469px" width="9" height="9"><path d="M1 4.5 L3.5 7 L8 1.5" fill="none" stroke="#21a121" stroke-width="2"/></svg>
<div class="a" style="left:610px;top:577px;width:153px;height:20px;background:linear-gradient(#fcfcfa,#f0eee6)"></div>
<svg class="a" style="left:610px;top:577px" width="153" height="20" viewBox="610 577 153 20">
 <defs><linearGradient id="lg1" x1="0" y1="0" x2="1" y2="1"><stop offset="0" stop-color="#f0f4fa"/><stop offset="1" stop-color="#b8d0ec"/></linearGradient></defs>
 <rect x="613.5" y="580.5" width="12" height="12" rx="1.5" fill="url(#lg1)" stroke="#a8b0b8"/>
 <circle cx="624" cy="591" r="3.2" fill="#2ea040"/>
 <path d="M624 589.3 V592.7 M622.3 591 H625.7" stroke="#9ee0a0" stroke-width="1"/>
 <path d="M636.5 583 L645.5 591.5 M645.5 583 L636.5 591.5" stroke="#a8a8a8" stroke-width="3" stroke-linecap="round"/>
 <rect x="655.5" y="580.5" width="11" height="11" rx="1" fill="#dde6f0" stroke="#a8b4c0"/>
 <rect x="658.5" y="583.5" width="11" height="11" rx="1" fill="url(#lg1)" stroke="#98a8b8"/>
 <rect x="677.5" y="580.5" width="12" height="13" fill="#e4e4e0" stroke="#d8d8d4"/>
 <path d="M681 584 H686 V586.5 H688 L683.5 591 L679 586.5 H681Z" fill="#c0c0c0"/>
 <path d="M705 580.5 L710.5 586.5 H707.2 V593.5 H702.8 V586.5 H699.5Z" fill="#bcbcbc"/>
 <path d="M726 593.5 L731.5 587.5 H728.2 V580.5 H723.8 V587.5 H720.5Z" fill="#bcbcbc"/>
 <path d="M742 590.5 L750 582.5 Q752 581 754 583 Q755.5 585 754 586.5 L746 594.5 Q744 595.5 742.5 594 Q741 592.5 742 590.5Z" fill="#fafafa" stroke="#98a8b8" stroke-width="0.9"/>
 <path d="M743 580 L749.5 586.5" stroke="#d8d090" stroke-width="2.6"/>
 <circle cx="743" cy="580.5" r="1.3" fill="#d89090"/>
 <circle cx="749.5" cy="586.5" r="1" fill="#303030"/>
</svg>

<!-- status bar -->
<svg class="a" style="left:6px;top:610px" width="12" height="12" viewBox="0 0 12 12">
 <rect x="1" y="1" width="10" height="10" fill="#c8dcf4"/>
 <rect x="0.5" y="0.5" width="11" height="11" fill="none" stroke="#6a8ab0" stroke-dasharray="1.5 1.5"/>
</svg>
<div class="t" style="left:22px;top:612px;font-size:10.2px">Selection top left: 0, 0. Bounding rectangle size: 400 x 400. Area: 103,396 pixels square</div>
<div class="a" style="left:505px;top:607px;width:1px;height:17px;background:#c8c5b5;border-right:1px solid #fff;box-sizing:content-box"></div>
<svg class="a" style="left:508px;top:608px" width="16" height="15" viewBox="0 0 16 15">
 <path d="M1 1 V14 M0 1.5 H3 M0 13.5 H3 M5 1 H15 M5.5 0 V3 M14.5 0 V3" stroke="#3a7ab8" stroke-width="0.8"/>
 <path d="M5.5 4.5 H11 L13.5 7 V14.5 H5.5Z" fill="#fff" stroke="#808890" stroke-width="0.8"/>
</svg>
<div class="t" style="left:527px;top:612px;font-size:10px">400 x 400</div>
<div class="a" style="left:633px;top:607px;width:1px;height:17px;background:#c8c5b5;border-right:1px solid #fff;box-sizing:content-box"></div>
<svg class="a" style="left:635px;top:608px" width="16" height="15" viewBox="0 0 16 15">
 <path d="M3 0 V8 M0 3 H8" stroke="#3a7ab8" stroke-width="0.8"/>
 <path d="M8 3 H15" stroke="#a0a0a0" stroke-width="0.8" stroke-dasharray="1 1"/>
 <path d="M5.5 5.5 H11 L13.5 8 V14.5 H5.5Z" fill="#fff" stroke="#808890" stroke-width="0.8"/>
</svg>
<div class="t" style="left:653px;top:612px;font-size:10px">418, 160</div>
<svg class="a" style="left:756px;top:612px" width="12" height="12" viewBox="0 0 12 12">
 <g fill="#8e8e8a"><rect x="9" y="1" width="2" height="2"/><rect x="5" y="5" width="2" height="2"/><rect x="9" y="5" width="2" height="2"/><rect x="1" y="9" width="2" height="2"/><rect x="5" y="9" width="2" height="2"/><rect x="9" y="9" width="2" height="2"/></g>
</svg>
</body></html>
